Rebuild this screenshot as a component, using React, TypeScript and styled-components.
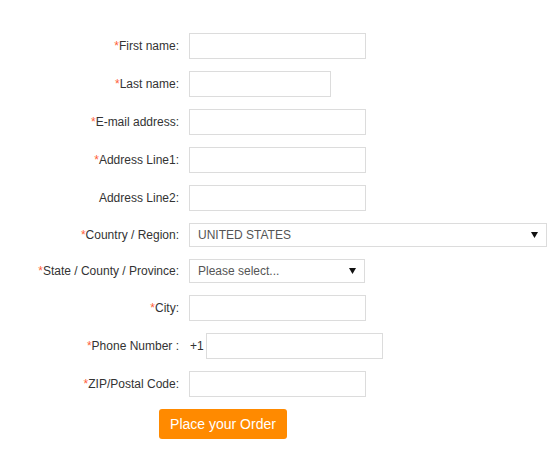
import React from "react";
import styled, { createGlobalStyle } from "styled-components";

const Global = createGlobalStyle`
  html, body { margin: 0; padding: 0; background: #fff; }
  body { font-family: "Liberation Sans", Arial, sans-serif; font-size: 12px; color: #333; }
`;

const Form = styled.form`
  display: flex;
  flex-direction: column;
  gap: 12px;
  padding-top: 33px;
`;

const Row = styled.div`
  display: grid;
  grid-template-columns: 179px auto;
  column-gap: 10px;
  align-items: center;
`;

const Label = styled.label`
  text-align: right;
  font-size: 12px;
  line-height: 14px;
  color: #333;
  white-space: nowrap;
`;

const Star = styled.span`
  color: #ff5f3a;
`;

const Field = styled.div`
  display: flex;
  align-items: center;
  gap: 2px;
`;

const Input = styled.input<{ $w?: number }>`
  box-sizing: border-box;
  width: ${(p) => p.$w ?? 177}px;
  height: 26px;
  border: 1px solid #dcdcdc;
  background: #fff;
  margin: 0;
  padding: 0 6px;
  font: 12px "Liberation Sans", Arial, sans-serif;
  outline: none;
`;

const Prefix = styled.span`
  font-size: 12px;
  color: #333;
  padding-left: 1px;
`;

const SelectBox = styled.div<{ $w: number }>`
  box-sizing: border-box;
  width: ${(p) => p.$w}px;
  height: 24px;
  border: 1px solid #dcdcdc;
  display: flex;
  align-items: center;
  justify-content: space-between;
  padding: 0 8px;
  font-size: 12px;
  color: #555;
`;

const Arrow = () => (
  <svg width="7" height="6" viewBox="0 0 7 6">
    <polygon points="0,0 7,0 3.5,6" fill="#111" />
  </svg>
);

const ButtonRow = styled.div`
  padding-left: 159px;
`;

const Button = styled.button`
  height: 30px;
  width: 128px;
  border: none;
  border-radius: 3px;
  background: #ff8a00;
  color: #fff;
  font: 14px "Liberation Sans", Arial, sans-serif;
  padding: 0;
  cursor: pointer;
`;

type FieldDef = { label: string; req: boolean; w?: number };

const Text = ({ label, req, children }: { label: string; req: boolean; children: React.ReactNode }) => (
  <Row>
    <Label>
      {req && <Star>*</Star>}
      {label}
    </Label>
    <Field>{children}</Field>
  </Row>
);

export default function App() {
  const top: FieldDef[] = [
    { label: "First name:", req: true },
    { label: "Last name:", req: true, w: 142 },
    { label: "E-mail address:", req: true },
    { label: "Address Line1:", req: true },
    { label: "Address Line2:", req: false },
  ];
  return (
    <>
      <Global />
      <Form onSubmit={(e) => e.preventDefault()}>
        {top.map((f) => (
          <Text key={f.label} label={f.label} req={f.req}>
            <Input $w={f.w} />
          </Text>
        ))}
        <Text label="Country / Region:" req>
          <SelectBox $w={358}>
            <span>UNITED STATES</span>
            <Arrow />
          </SelectBox>
        </Text>
        <Text label="State / County / Province:" req>
          <SelectBox $w={176}>
            <span>Please select...</span>
            <Arrow />
          </SelectBox>
        </Text>
        <Text label="City:" req>
          <Input />
        </Text>
        <Text label="Phone Number :" req>
          <Prefix>+1</Prefix>
          <Input />
        </Text>
        <Text label="ZIP/Postal Code:" req>
          <Input />
        </Text>
        <ButtonRow>
          <Button type="submit">Place your Order</Button>
        </ButtonRow>
      </Form>
    </>
  );
}
